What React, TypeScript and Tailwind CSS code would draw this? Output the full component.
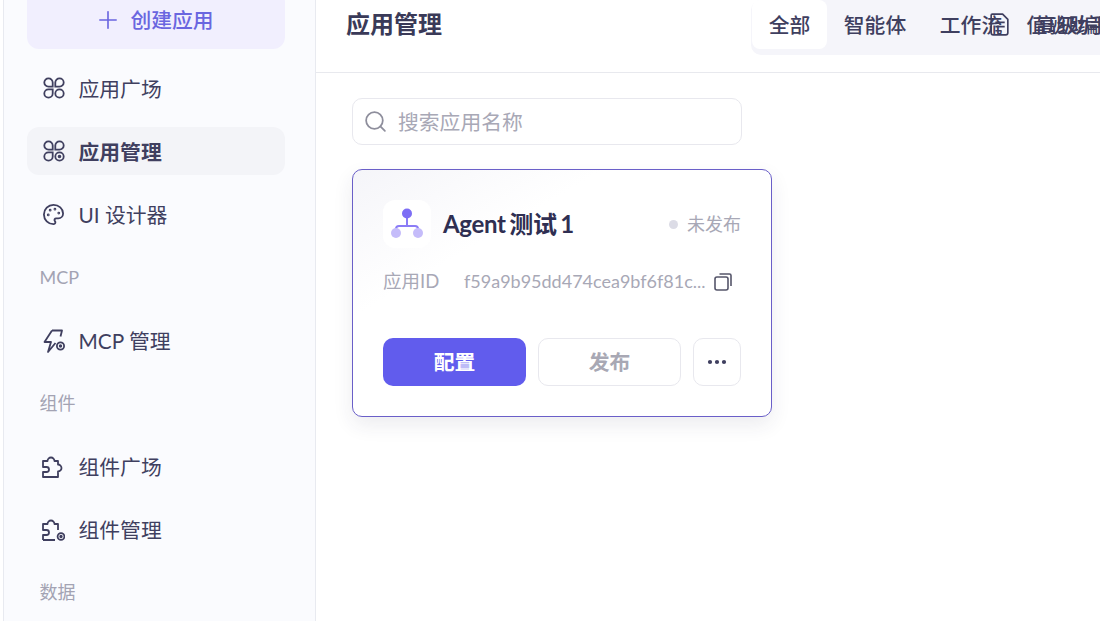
import React from 'react';
import { Plus, Search, Palette, MoreHorizontal } from 'lucide-react';

const font = "font-['Lato','Noto_Sans_CJK_SC',sans-serif]";

function Apps({ gear = false }: { gear?: boolean }) {
  return (
    <svg viewBox="0 0 22 22" className="h-[22px] w-[22px]" fill="none" stroke="currentColor" strokeWidth="1.8">
      <path d="M9.7 9.7H5.5a4.2 4.2 0 1 1 4.2-4.2zM12.3 9.7h4.2a4.2 4.2 0 1 0-4.2-4.2zM9.7 12.3H5.5a4.2 4.2 0 1 0 4.2 4.2z" />
      <circle cx="16.5" cy="16.5" r="4.2" />
      {gear ? <circle cx="16.5" cy="16.5" r="0.9" fill="currentColor" /> : null}
    </svg>
  );
}

function Bolt() {
  return (
    <svg viewBox="0 0 22 24" className="h-[24px] w-[22px]" fill="none" stroke="currentColor" strokeWidth="1.8" strokeLinejoin="round">
      <path d="M9 1.5h10l-1.5 6M9 1.5L1.5 13H8L5 23l7.5-9" />
      <circle cx="17.5" cy="17" r="3.6" />
      <circle cx="17.5" cy="17" r=".8" fill="currentColor" />
    </svg>
  );
}

function Puzzle({ gear = false }: { gear?: boolean }) {
  return (
    <svg viewBox="0 0 23 22" className="h-[22px] w-[23px]" fill="none" stroke="currentColor" strokeWidth="1.8" strokeLinejoin="round">
      {gear ? (
        <>
          <path d="M1 21v-5h3.5a2.5 2.5 0 0 0 0-5H1V5h4.5a3.5 3.5 0 0 1 7 0H16v6M1 21h12" />
          <circle cx="19" cy="17.5" r="3.4" />
          <circle cx="19" cy="17.5" r=".8" fill="currentColor" />
        </>
      ) : (
        <path d="M1 21v-5h3.5a2.5 2.5 0 0 0 0-5H1V5h4.5a3.5 3.5 0 0 1 7 0H16v3.5a3.5 3.5 0 0 1 0 7V21z" />
      )}
    </svg>
  );
}

function NavItem({ icon, label, active = false, low = false }: { icon: React.ReactNode; label: string; active?: boolean; low?: boolean }) {
  return (
    <div className={`flex h-[48px] items-center gap-[13.5px] rounded-[12px] px-[15px] text-[20.8px] text-[#3f3f5f] ${active ? 'bg-[#f3f4f8] font-semibold' : ''}`}>
      <span className="flex w-[23px] shrink-0 items-center justify-center">{icon}</span>
      <span className={low ? 'pt-[2px]' : ''}>{label}</span>
    </div>
  );
}

function SectionLabel({ children }: { children: React.ReactNode }) {
  return <div className="flex h-[36px] items-center px-[12.5px] text-[18px] text-[#a3a3b3]">{children}</div>;
}

function Sidebar() {
  return (
    <aside className="ml-[3px] flex w-[313px] shrink-0 flex-col border-x border-[#e8eaf0] bg-[#fafbfe] pr-[30px] pl-[23px]">
      <div className="-mt-[10px] flex h-[59px] shrink-0 items-center justify-center gap-[8px] rounded-[12px] bg-[#f1effe] pr-[4px] text-[20.8px] font-medium text-[#6a66e0]">
        <Plus className="h-[28px] w-[28px]" strokeWidth={1.4} />
        <span>创建应用</span>
      </div>
      <div className="mt-[15px] flex flex-col gap-[15px]">
        <NavItem icon={<Apps />} label="应用广场" low />
        <NavItem icon={<Apps gear />} label="应用管理" active low />
        <NavItem icon={<Palette className="h-[25px] w-[25px]" strokeWidth={1.9} />} label="UI 设计器" low />
      </div>
      <div className="mt-[21px]"><SectionLabel>MCP</SectionLabel></div>
      <div className="mt-[22px]"><NavItem icon={<Bolt />} label="MCP 管理" /></div>
      <div className="mt-[20px]"><SectionLabel>组件</SectionLabel></div>
      <div className="mt-[22px] flex flex-col gap-[15px]">
        <NavItem icon={<Puzzle />} label="组件广场" />
        <NavItem icon={<Puzzle gear />} label="组件管理" />
      </div>
      <div className="mt-[20px]"><SectionLabel>数据</SectionLabel></div>
    </aside>
  );
}

function Header() {
  return (
    <header className="relative flex h-[73px] shrink-0 items-start justify-between overflow-hidden border-b border-[#e8e9ee] bg-white pl-[30px]">
      <h1 className="mt-[6px] text-[24px] leading-[36px] font-semibold text-[#3a3a58]">应用管理</h1>
      <div className="absolute top-0 left-[435px] flex h-[55px] w-[400px] items-start rounded-[10px] bg-[#f5f5fa] pl-[1px] text-[20.8px] font-medium text-[#3f3f5f]">
        <div className="flex h-[49px] w-[75px] items-center justify-center rounded-[8px] bg-white">全部</div>
        <div className="flex h-[49px] w-[96px] items-center justify-center">智能体</div>
        <div className="flex h-[49px] w-[96px] items-center justify-center whitespace-nowrap">工作流</div>
        <div className="flex h-[49px] w-[98px] items-center justify-center whitespace-nowrap">值班助手</div>
      </div>
      {/* the action buttons sit on top of the tabs at this narrow width */}
      <div className="absolute top-0 left-[671px] flex h-[49px] items-center gap-[24px] text-[20.8px] font-medium whitespace-nowrap text-[#3f3f5f]">
        <svg viewBox="0 0 24 24" className="h-[25px] w-[25px]" fill="none" stroke="currentColor" strokeWidth="1.6" strokeLinejoin="round">
          <path d="M5 2h10l5 5v13a2 2 0 0 1-2 2H6a2 2 0 0 1-2-2V3a1 1 0 0 1 1-1z" />
          <path d="M8 10h9M8 14h9M8 18h6" />
        </svg>
        <span>高级编码</span>
      </div>
    </header>
  );
}

function AppCard() {
  return (
    <div className="mt-[24px] flex h-[248px] w-[420px] flex-col rounded-[10px] border border-[#6a5fc8] bg-white bg-gradient-to-br from-[#f5f5f9] via-white via-30% to-white px-[30px] pt-[30px] shadow-[0_8px_20px_rgba(40,40,80,0.09)]">
      <div className="flex items-center">
        <div className="flex h-[48px] w-[48px] items-center justify-center rounded-[12px] bg-white">
          <svg viewBox="0 0 34 34" className="h-[34px] w-[34px]">
            <path d="M17 11v8M6 24v-2a3 3 0 0 1 3-3h16a3 3 0 0 1 3 3v2" fill="none" stroke="#8b7cf6" strokeWidth="2" />
            <circle cx="17" cy="6.5" r="5" fill="#7d6ef5" />
            <circle cx="6" cy="26" r="5" fill="#c5bcfa" />
            <circle cx="28" cy="26" r="5" fill="#c5bcfa" />
          </svg>
        </div>
        <div className="ml-[12px] text-[24px] font-bold tracking-[-0.3px] text-[#2f2f52] [word-spacing:-2px]">Agent 测试 1</div>
        <div className="ml-auto flex items-center text-[18px] text-[#a8a8b6]">
          <span className="mr-[9px] h-[9px] w-[9px] rounded-full bg-[#dcdce6]" />
          未发布
        </div>
      </div>
      <div className="mt-[20px] flex items-center text-[18px] text-[#a8a8b6]">
        <span className="w-[81px] text-[18.5px]">应用ID</span>
        <span className="w-[241px] whitespace-nowrap">f59a9b95dd474cea9bf6f81c...</span>
        <svg viewBox="0 0 18 18" className="ml-[9px] h-[18px] w-[18px]" fill="none" stroke="#55556a" strokeWidth="1.6">
          <rect x="1" y="4" width="13" height="13" rx="2" />
          <path d="M5.5 1h10a1.5 1.5 0 0 1 1.5 1.5V13" />
        </svg>
      </div>
      <div className="mt-[42px] flex items-center">
        <button className="h-[48px] w-[143px] rounded-[10px] bg-[#615ced] text-[20.8px] font-bold text-white">配置</button>
        <button className="ml-[12px] h-[48px] w-[143px] rounded-[10px] border border-[#e8e8ee] bg-white text-[20.8px] font-semibold text-[#a8a8b4]">发布</button>
        <button className="ml-[12px] flex h-[48px] w-[48px] items-center justify-center rounded-[10px] border border-[#e8e8ee] bg-white text-[#3f3f5f]">
          <MoreHorizontal className="h-[24px] w-[24px]" strokeWidth={2.2} />
        </button>
      </div>
    </div>
  );
}

export default function App() {
  return (
    <div className={`flex h-[621px] w-[1100px] overflow-hidden bg-white ${font}`}>
      <Sidebar />
      <main className="flex min-w-0 flex-1 flex-col">
        <Header />
        <div className="px-[36px] pt-[25px]">
          <div className="flex h-[47px] w-[390px] items-center gap-[10px] rounded-[10px] border border-[#e8e8ee] bg-white px-[10px] text-[20.8px] text-[#a8a8b6]">
            <Search className="h-[25px] w-[25px] text-[#8e8e9c]" strokeWidth={1.7} />
            <span>搜索应用名称</span>
          </div>
          <AppCard />
        </div>
      </main>
    </div>
  );
}
